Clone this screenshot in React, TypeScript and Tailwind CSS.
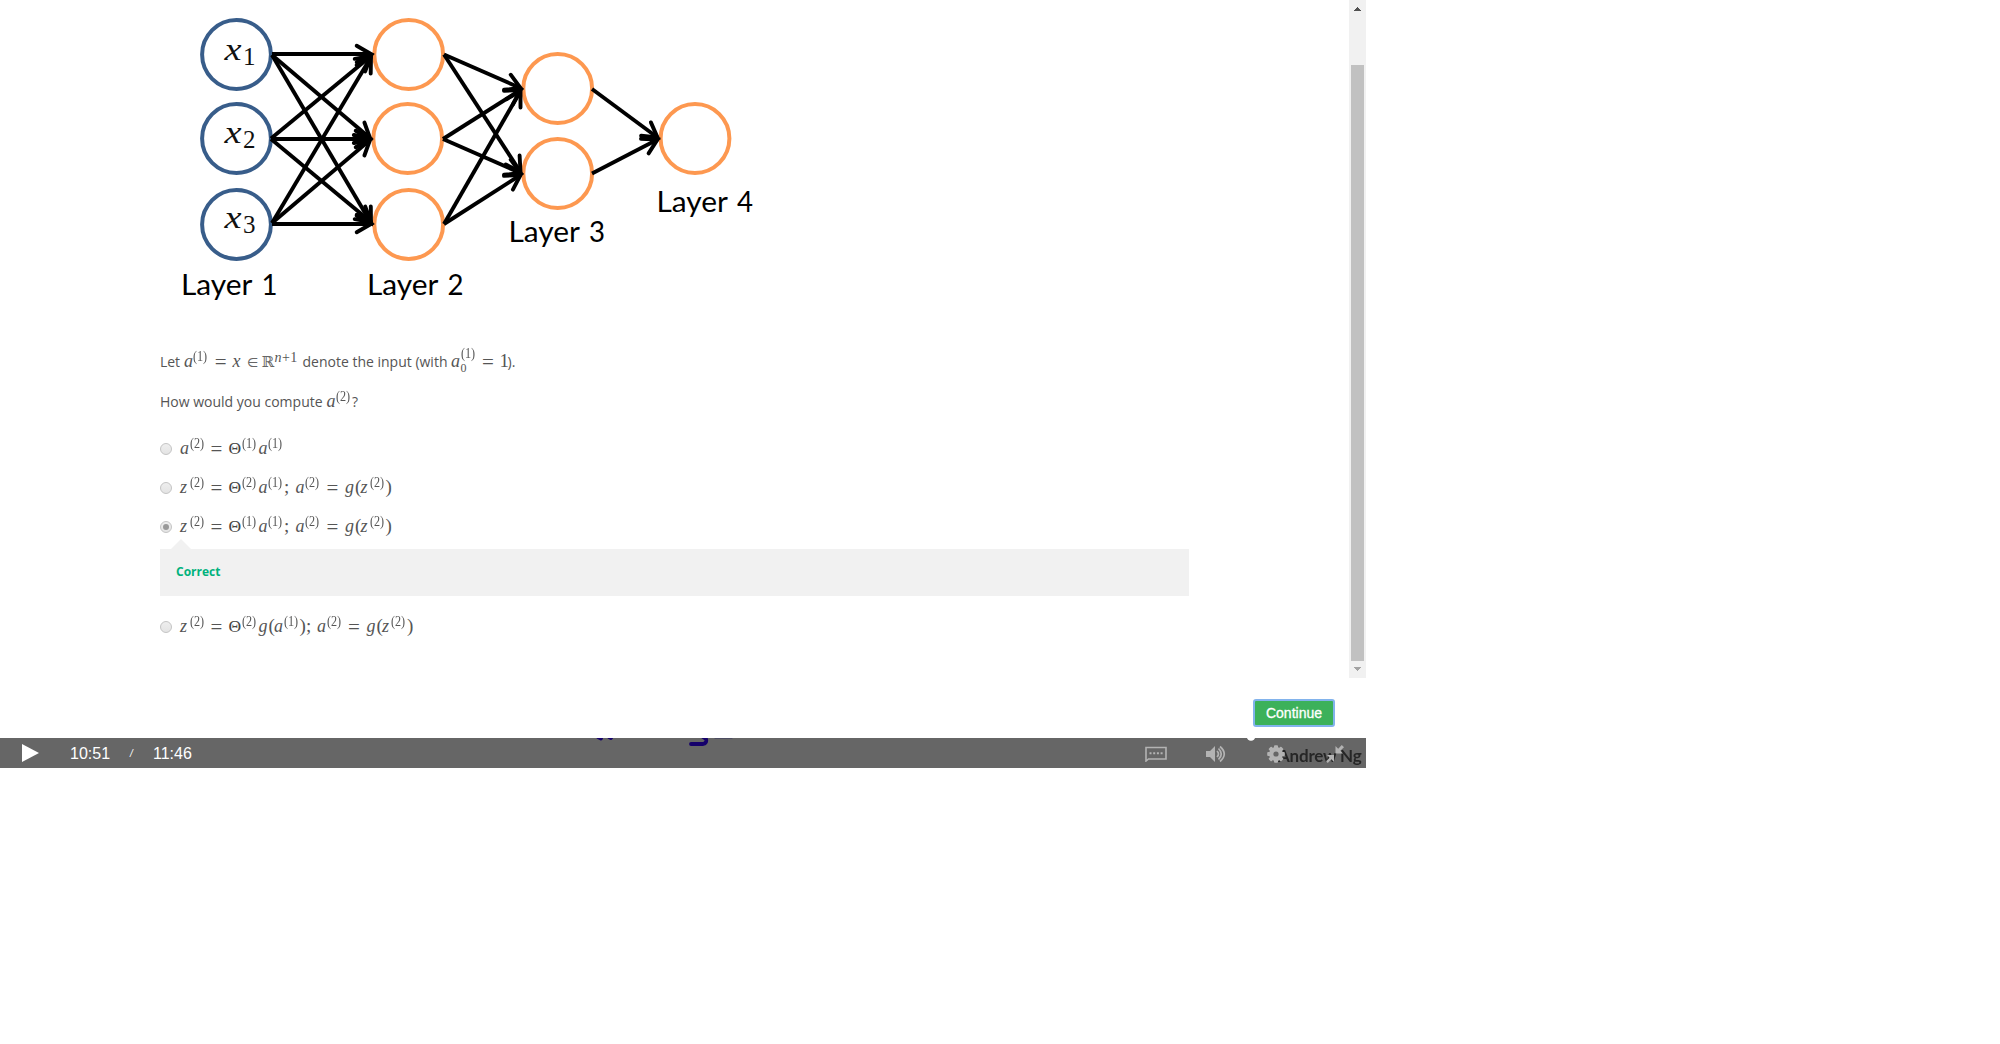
import React from "react";

type Pt = [number, number];

const arrows: [Pt, Pt][] = [
  [[272, 54], [371, 54]],
  [[272, 55], [370, 138]],
  [[272, 55], [371, 223]],
  [[271, 138.5], [371, 56]],
  [[271, 139], [370, 139]],
  [[271, 139], [371, 222]],
  [[272, 223], [371, 57]],
  [[272, 223], [370, 140]],
  [[272, 224], [371, 224]],
  [[444, 54.5], [520.5, 88]],
  [[444, 54.5], [520.5, 172]],
  [[443, 139], [520.5, 90]],
  [[443, 139], [520.5, 173]],
  [[444, 224], [520.5, 91]],
  [[444, 224], [520.5, 175]],
  [[592, 89], [657.5, 137.5]],
  [[592, 173.5], [657.5, 139.5]],
];

const labels: [string, number, number][] = [
  ["1", 181, 294.5],
  ["2", 367, 294.5],
  ["3", 508.5, 241.5],
  ["4", 656.5, 211.5],
];

function Arrow({ from, to }: { from: Pt; to: Pt }) {
  const a = Math.atan2(to[1] - from[1], to[0] - from[0]);
  const arm = (s: number) =>
    `${(to[0] - 16.5 * Math.cos(a + s)).toFixed(1)} ${(to[1] - 16.5 * Math.sin(a + s)).toFixed(1)}`;
  return (
    <g>
      <path d={`M${from[0]} ${from[1]}L${to[0]} ${to[1]}`} strokeLinecap="butt" />
      <path d={`M${arm(0.52)}L${to[0]} ${to[1]}L${arm(-0.52)}`} />
    </g>
  );
}

function Network() {
  return (
    <svg width="640" height="320" viewBox="160 0 640 320" className="block shrink-0">
      <g fill="none" strokeWidth="4">
        <g stroke="#385d8a">
          {[54.5, 138.5, 224.5].map((y) => <circle key={y} cx="236.5" cy={y} r="34.4" />)}
        </g>
        <g stroke="#fd9850">
          <circle cx="408.7" cy="54.5" r="34.4" />
          <circle cx="407.7" cy="138.5" r="34.4" />
          <circle cx="408.7" cy="224.5" r="34.4" />
          <circle cx="557.7" cy="88.5" r="34.4" />
          <circle cx="557.7" cy="173.5" r="34.4" />
          <circle cx="695" cy="138.5" r="34.4" />
        </g>
      </g>
      <g fill="none" stroke="#000" strokeWidth="3.9" strokeLinecap="round" strokeLinejoin="miter">
        {arrows.map(([f, t], i) => <Arrow key={i} from={f} to={t} />)}
      </g>
      <g fill="#111" style={{ fontFamily: '"Liberation Serif", serif' }}>
        {[60, 143, 228].map((y, i) => (
          <g key={y}>
            <text x="224.5" y={y} fontSize="32" fontStyle="italic" textLength="17" lengthAdjust="spacingAndGlyphs">x</text>
            <text x="243" y={y + 5} fontSize="25">{i + 1}</text>
          </g>
        ))}
      </g>
      <g style={{ fontFamily: "Lato, sans-serif" }} fontSize="28.5">
        {labels.map(([n, x, y]) => (
          <g key={n}>
            <text x={x} y={y} textLength="71.5" lengthAdjust="spacingAndGlyphs">Layer</text>
            <text x={x + 80.5} y={y} textLength="16" lengthAdjust="spacingAndGlyphs">{n}</text>
          </g>
        ))}
      </g>
    </svg>
  );
}

type Kind = "v" | "s" | "r" | "o" | "p";
type Tok = [string, Kind, number];

const kinds: Record<Kind, string> = {
  v: "italic text-[18px]",
  s: "text-[13.5px] relative -top-[5px] origin-bottom-left scale-x-[0.9] scale-y-[1.1]",
  r: "text-[17.5px] text-[#444]",
  o: "text-[21px] text-center relative top-[2px]",
  p: "text-[19px]",
};

function Formula({ toks }: { toks: Tok[] }) {
  return (
    <span className="flex items-baseline font-['Liberation_Serif',serif] leading-5 text-[#555] whitespace-nowrap">
      {toks.map(([t, k, w], i) => (
        <span key={i} className={`shrink-0 ${kinds[k]}`} style={{ width: w }}>{t}</span>
      ))}
    </span>
  );
}

const gz: Tok[] = [
  ["a", "v", 9.5], ["(2)", "s", 15], ["=", "o", 25], ["g", "v", 10],
  ["(", "p", 5.5], ["z", "v", 9], ["(2)", "s", 16], [")", "p", 6],
];
const head = (v: string, n: string): Tok[] => [
  [v, "v", 9.5], ["(2)", "s", 15], ["=", "o", 24], ["Θ", "r", 13.5], [n, "s", 16.5],
];
const options: Tok[][] = [
  [...head("a", "(1)"), ["a", "v", 9.5], ["(1)", "s", 15]],
  [...head("z", "(2)"), ["a", "v", 9.5], ["(1)", "s", 16], [";", "p", 11.5], ...gz],
  [...head("z", "(1)"), ["a", "v", 9.5], ["(1)", "s", 16], [";", "p", 11.5], ...gz],
  [...head("z", "(2)"), ["g", "v", 10], ["(", "p", 5.5], ["a", "v", 9.5], ["(1)", "s", 16], [")", "p", 6.5], [";", "p", 11], ...gz],
];

function Option({ toks, checked = false }: { toks: Tok[]; checked?: boolean }) {
  return (
    <div className="flex h-[39px] items-center">
      <span className="mr-[8px] flex size-[12px] items-center justify-center rounded-full border border-[#c4c4c4] bg-linear-to-b from-[#eeeeee] to-[#e4e4e4]">
        {checked && <span className="size-[6px] shrink-0 rounded-full bg-[#999]" />}
      </span>
      <Formula toks={toks} />
    </div>
  );
}

export default function App() {
  return (
    <div className="min-h-[1044px] bg-white">
      <div className="flex h-[768px] w-[1366px] flex-col">
        <div className="flex h-[678px]">
          <div className="flex w-[1349px] flex-col pl-[160px] font-['Open_Sans',sans-serif] text-[14px] text-[#555]">
            <Network />
            <div className="mt-[30px] flex h-5 items-baseline whitespace-nowrap leading-5">
              <span className="w-[24px] tracking-[-0.1px]">Let</span>
              <Formula toks={[["a", "v", 9], ["(1)", "s", 16], ["=", "o", 23.5], ["x", "v", 14.5]]} />
              <span className="w-[14.5px] font-['DejaVu_Sans',sans-serif] text-[13px] text-[#666]">∈</span>
              <span className="w-[13px] font-['DejaVu_Serif',serif] text-[15px] text-[#666]">ℝ</span>
              <span className="relative -top-[5px] w-[28px] font-['Liberation_Serif',serif] text-[14px] tracking-[0.4px]"><i>n</i>+1</span>
              <span className="w-[148.5px] text-[14px]">denote the input (with</span>
              <Formula toks={[["a", "v", 9.5]]} />
              <span className="relative w-[16px] font-['Liberation_Serif',serif] text-[13.5px]">
                <span className="relative -top-[8px] inline-block origin-bottom-left scale-x-[0.9] scale-y-[1.1]">(1)</span>
                <span className="absolute left-0 top-[5px] text-[12px]">0</span>
              </span>
              <Formula toks={[["=", "o", 23], ["1", "p", 8]]} />
              <span>).</span>
            </div>
            <div className="mt-[21px] flex h-5 items-baseline whitespace-nowrap leading-5">
              <span className="w-[166.5px]">How would you compute</span>
              <Formula toks={[["a", "v", 9.5], ["(2)", "s", 16]]} />
              <span>?</span>
            </div>
            <div className="mt-[18px] flex flex-col">
              <Option toks={options[0]} />
              <Option toks={options[1]} />
              <Option toks={options[2]} checked />
            </div>
            <svg width="20" height="10" viewBox="0 0 20 10" className="-mt-[7px] ml-[11px] block shrink-0">
              <path d="M0 10L10 0L20 10Z" fill="#f1f1f1" />
            </svg>
            <div className="flex h-[47px] w-[1029px] shrink-0 items-center bg-[#f1f1f1] pb-[2px] pl-4">
              <span className="text-[12px] font-bold leading-5 text-[#00b27c]">Correct</span>
            </div>
            <div className="mt-[11px]"><Option toks={options[3]} /></div>
          </div>
          <div className="flex w-[17px] flex-col items-center bg-[#f1f1f1]">
            <svg width="7" height="4" viewBox="0 0 7 4" className="mt-[7px]" shapeRendering="crispEdges"><path d="M0 4L3.5 0L7 4Z" fill="#505050" /></svg>
            <div className="mt-[54px] h-[596px] w-[13px] bg-[#c1c1c1]" />
            <svg width="7" height="4" viewBox="0 0 7 4" className="mt-[6px]" shapeRendering="crispEdges"><path d="M0 0H7L3.5 4Z" fill="#a3a3a3" /></svg>
          </div>
        </div>
        <div className="flex h-[60px] items-start justify-end pr-[31px] pt-[21px]">
          <button className="h-7 w-[82px] rounded-[3px] border-2 border-[#82b3ec] bg-[#3cb15a] font-['Liberation_Sans',sans-serif] text-[14px] leading-6 text-white [-webkit-text-stroke:0.3px_white]">Continue</button>
        </div>
        <div className="relative flex h-[30px] items-center overflow-hidden bg-[#666] font-['Liberation_Sans',sans-serif] text-[16px] text-white">
          <svg width="17" height="18" viewBox="0 0 17 18" className="ml-[22px]"><path d="M0 0L17 9L0 18Z" fill="#fff" /></svg>
          <span className="ml-[31px] w-[60px] pt-[2px]">10:51</span>
          <span className="w-[23px] pt-px text-[10px] italic">/</span>
          <span className="pt-[2px]">11:46</span>
          <svg width="140" height="10" viewBox="0 0 140 10" className="absolute left-[595px] top-0 blur-[0.6px]" fill="none" stroke="#15006b" strokeWidth="3.8" strokeLinecap="round">
            <path d="M3 -1L6 .5M14 -1L16 0" />
            <path d="M96 6H108Q112 5 111 1L108 -1" />
            <path d="M120 0H137" stroke="#35345d" strokeWidth="1" />
          </svg>
          <span className="absolute left-[1278px] top-[7px] whitespace-nowrap font-[Lato] text-[17px] font-bold leading-[22px] tracking-[-0.2px] text-[#262626] blur-[0.6px]">Andrew Ng</span>
          <svg width="10" height="5" viewBox="0 0 10 5" className="absolute left-[1246px] top-0"><circle cx="5" cy="-1.5" r="4.3" fill="#fff" /></svg>
          <div className="absolute right-[22px] top-[0.5px] flex h-[30px] items-center text-[#b3b3b3]">
            <svg width="22" height="16" viewBox="0 0 22 16" className="mr-[39px]" fill="none" stroke="currentColor" strokeWidth="1.6">
              <path d="M1 15V1.5H21V13H3.5Z" />
              <path d="M4.5 7.3H18" strokeWidth="2" strokeDasharray="2 1.7" />
            </svg>
            <svg width="20" height="18" viewBox="0 0 20 18" className="mr-[41px]">
              <path d="M0 6H4L9 1V17L4 12H0Z" fill="currentColor" />
              <path d="M11 6Q14 9 11 12M12.5 3.5Q18 9 12.5 14.5M14 1.5Q22.5 9 14 16.5" fill="none" stroke="currentColor" strokeWidth="1.7" />
            </svg>
            <svg width="18" height="18" viewBox="-9 -9 18 18" className="mr-[41px]">
              {[0, 45, 90, 135].map((r) => <rect key={r} x="-2" y="-8.8" width="4" height="17.6" rx="1" fill="currentColor" transform={`rotate(${r})`} />)}
              <circle r="4.8" fill="none" stroke="currentColor" strokeWidth="4.2" />
              <circle r="2.6" fill="#666" />
            </svg>
            <svg width="18" height="18" viewBox="0 0 18 18">
              <path d="M9.5 1V8.5H17L14.3 5.8L18 2.2L15.8 0L12.2 3.7ZM8 17V10H1L3.7 12.7L0 16.2L1.8 18L5.3 14.3Z" fill="currentColor" />
            </svg>
          </div>
        </div>
      </div>
    </div>
  );
}
